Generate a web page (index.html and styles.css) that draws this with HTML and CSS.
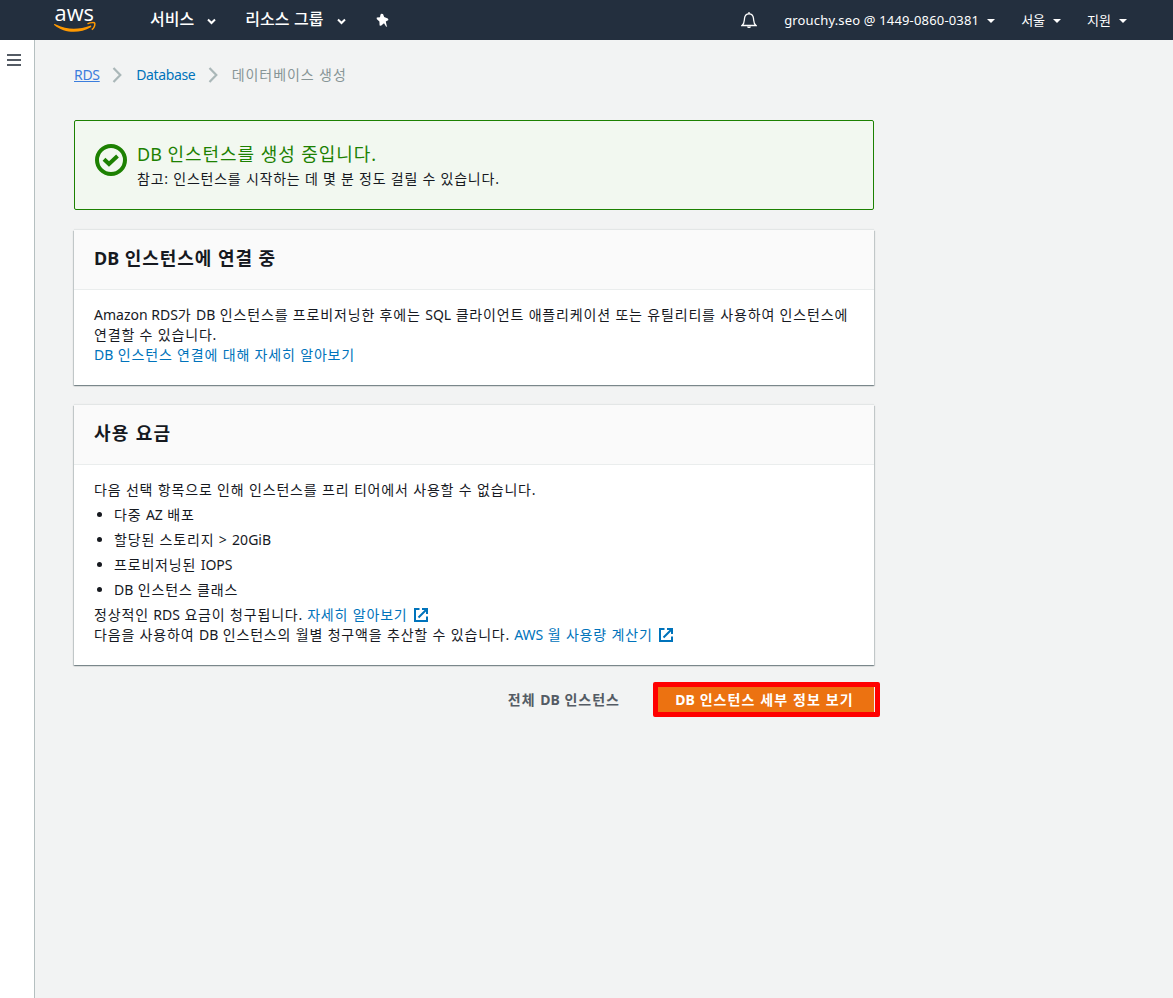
FILE: index.html
```
<!DOCTYPE html>
<html lang="ko">
<head>
<meta charset="utf-8">
<title>RDS · 데이터베이스 생성</title>
<link rel="stylesheet" href="styles.css">
</head>
<body>
<header class="topnav">
  <svg class="logo" width="44" height="34" viewBox="0 0 44 34" role="img" aria-label="aws">
    <text class="logo-text" x="1.5" y="17.5" textLength="39.5" lengthAdjust="spacingAndGlyphs">aws</text>
    <path d="M1 21.1C1.8 20.7 2.4 21.2 3.5 21.8C14 26.9 26 26.9 37 22.7C38.5 22.3 38.8 23.5 37.8 24.2C27 30.5 12 31 1.2 21.9Z" fill="#f90"/>
    <path d="M34.5 20.9C38 19.1 41.6 19.5 41.8 20.3C42 22.1 40.8 25.1 38.8 26.7" fill="none" stroke="#f90" stroke-width="1.5"/>
  </svg>
  <nav class="menu menu-main">
    <a class="menu-item"><span class="t">서비스</span><svg width="9" height="7" viewBox="0 0 9 7"><path d="M1 1.5L4.5 5L8 1.5" fill="none" stroke="#fff" stroke-width="2"/></svg></a>
    <a class="menu-item"><span class="t groups">리소스 그룹</span><svg width="9" height="7" viewBox="0 0 9 7"><path d="M1 1.5L4.5 5L8 1.5" fill="none" stroke="#fff" stroke-width="2"/></svg></a>
    <svg class="pin" width="14" height="15" viewBox="0 0 14 15"><path d="M5 .8L7 1L8.2 4L11.8 5.5L12.5 7L9.8 8.6L10.6 12.2L11.2 13.8L10 13.6L8 10.2L5 12.8L3.6 12.6L3.4 8.6L.7 6L.8 4.4L4 4.2L4.4 2Z" fill="#fff"/></svg>
  </nav>
  <nav class="menu menu-side">
    <svg class="bell" width="16" height="17" viewBox="0 0 16 17" fill="none" stroke="#fff" stroke-width="1.3"><path d="M1 13.5C3.4 11.6 3.2 10 3.5 6.5C3.8 3.5 5.5 1.9 8 1.9S12.2 3.5 12.5 6.5C12.8 10 12.6 11.6 15 13.5Z"/><path d="M8 0V2"/><path d="M6 14.4H10C9.7 16.6 6.3 16.6 6 14.4Z" fill="#fff" stroke="none"/></svg>
    <a class="side-item"><span class="t account">grouchy.seo @ 1449-0860-0381</span><i class="caret"></i></a>
    <a class="side-item"><span class="t">서울</span><i class="caret"></i></a>
    <a class="side-item"><span class="t">지원</span><i class="caret"></i></a>
  </nav>
</header>
<div class="shell">
  <aside class="rail"><i></i><i></i><i></i></aside>
  <main class="content">
    <nav class="crumbs">
      <a class="t crumb-rds">RDS</a>
      <svg width="10" height="16" viewBox="0 0 10 16"><path d="M1.5 1L8.3 8L1.5 15" fill="none" stroke="#aab7b8" stroke-width="2.2"/></svg>
      <a class="t crumb-db">Database</a>
      <svg width="10" height="16" viewBox="0 0 10 16"><path d="M1.5 1L8.3 8L1.5 15" fill="none" stroke="#aab7b8" stroke-width="2.2"/></svg>
      <span class="t crumb-now">데이터베이스 생성</span>
    </nav>
    <section class="alert">
      <svg width="32" height="32" viewBox="0 0 32 32" fill="none" stroke="#1d8102" stroke-width="4"><circle cx="16" cy="16" r="14"/><path d="M9 15.2L14 20L22.5 12"/></svg>
      <div>
        <h2 class="alert-title"><span class="t"><span class="en">DB</span> 인스턴스를 생성 중입니다.</span></h2>
        <p class="alert-note"><span class="t">참고: 인스턴스를 시작하는 데 몇 분 정도 걸릴 수 있습니다.</span></p>
      </div>
    </section>
    <section class="card card-connect">
      <h2 class="card-head"><span class="t"><span class="en">DB</span> 인스턴스에 연결 중</span></h2>
      <div class="card-body">
        <p><span class="t"><span class="en">Amazon RDS</span>가 <span class="en">DB</span> 인스턴스를 프로비저닝한 후에는 <span class="en">SQL</span> 클라이언트 애플리케이션 또는 유틸리티를 사용하여 인스턴스에</span><br><span class="t">연결할 수 있습니다.</span></p>
        <p><a class="t"><span class="en">DB</span> 인스턴스 연결에 대해 자세히 알아보기</a></p>
      </div>
    </section>
    <section class="card card-cost">
      <h2 class="card-head"><span class="t wide">사용 요금</span></h2>
      <div class="card-body">
        <p><span class="t">다음 선택 항목으로 인해 인스턴스를 프리 티어에서 사용할 수 없습니다.</span></p>
        <ul class="limits">
          <li><span class="t">다중 <span class="en">AZ</span> 배포</span></li>
          <li><span class="t">할당된 스토리지 &gt; <span class="en">20GiB</span></span></li>
          <li><span class="t">프로비저닝된 <span class="en">IOPS</span></span></li>
          <li><span class="t"><span class="en">DB</span> 인스턴스 클래스</span></li>
        </ul>
        <p class="row"><span class="t">정상적인 <span class="en">RDS</span> 요금이 청구됩니다.</span><a class="t">자세히 알아보기</a><svg class="ext" width="14" height="14" viewBox="0 0 14 14" fill="none" stroke="#0073bb" stroke-width="2"><path d="M5.5 1H1V13H13V8.5"/><path d="M8 1H13V6M13 1L4.5 9.5"/></svg></p>
        <p class="row"><span class="t">다음을 사용하여 <span class="en">DB</span> 인스턴스의 월별 청구액을 추산할 수 있습니다.</span><a class="t"><span class="en">AWS</span> 월 사용량 계산기</a><svg class="ext" width="14" height="14" viewBox="0 0 14 14" fill="none" stroke="#0073bb" stroke-width="2"><path d="M5.5 1H1V13H13V8.5"/><path d="M8 1H13V6M13 1L4.5 9.5"/></svg></p>
      </div>
    </section>
    <div class="actions">
      <a class="link-btn"><span class="t">전체 <span class="en">DB</span> 인스턴스</span></a>
      <div class="highlight"><button class="primary"><span class="t"><span class="en">DB</span> 인스턴스 세부 정보 보기</span></button></div>
    </div>
  </main>
</div>
</body>
</html>
```
FILE: styles.css
```
* { box-sizing: border-box; }
body {
  margin: 0;
  height: 998px;
  display: flex;
  flex-direction: column;
  overflow: hidden;
  background: #f2f3f3;
  color: #16191f;
  font: 14px/20px "Noto Sans", "Noto Sans CJK KR", sans-serif;
}
.t { white-space: nowrap; display: inline-block; }
.en { letter-spacing: 0; }
h2, p, ul { margin: 0; padding: 0; font-weight: 400; }
svg { display: block; flex: none; }

.topnav { height: 40px; flex: none; background: #232f3e; color: #fff; display: flex; align-items: center; padding-left: 53px; }
.logo { overflow: visible; }
.logo-text { font: 500 22px "Open Sans", sans-serif; fill: #fff; }
.menu { display: flex; align-items: center; }
.menu-main { margin-left: 53px; font-size: 16px; font-weight: 500; }
.menu-item { display: flex; align-items: center; gap: 13px; margin-right: 29px; }
.menu-item .t { margin-bottom: 2px; }
.menu-item svg { margin-top: 2px; }
.groups { letter-spacing: .1px; }
.pin { margin-left: 1px; }
.menu-side { margin-left: auto; padding-right: 46px; font-size: 13px; }
.bell { margin-right: 27px; }
.side-item { display: flex; align-items: center; gap: 8px; margin-left: 26px; }
.bell + .side-item { margin-left: 0; }
.account { letter-spacing: .167px; }
.caret { border: 4px solid transparent; border-top-color: #fff; border-bottom: 0; margin-top: 1px; }

.shell { flex: 1; display: flex; }
.rail { width: 35px; background: #fff; border-right: 1px solid #b5bfc0; padding: 14px 0 0 7px; display: flex; flex-direction: column; gap: 3px; }
.rail i { width: 14px; height: 2px; background: #545b64; }
.content { padding: 25px 0 0 39px; width: 846px; }

.crumbs { display: flex; align-items: center; height: 20px; }
.crumbs svg { margin: 0 14px 0 12.5px; }
.crumbs a, .card a { color: #0073bb; }
.crumbs .crumb-rds { color: #3b7ddd; text-decoration: underline; letter-spacing: -.3px; }
.crumb-db { letter-spacing: -.38px; }
.crumb-now { color: #879596; letter-spacing: .92px; }

.alert { margin-top: 35px; width: 800px; height: 90px; border: 1px solid #1d8102; border-radius: 2px; background: #f2f8f0; display: flex; padding: 22px 20px; gap: 10px; }
.alert > svg { margin-top: 1px; }
.alert-title { font-size: 18px; line-height: 22px; color: #1d8102; letter-spacing: .95px; }
.alert-note { margin-top: 4px; letter-spacing: .77px; }

.card { width: 800px; background: #fff; box-shadow: 0 1px 1px 0 rgba(0,28,36,.3), 1px 1px 1px 0 rgba(0,28,36,.15), -1px 1px 1px 0 rgba(0,28,36,.15), 0 -1px 1px 0 rgba(0,28,36,.06); }
.card-connect { margin-top: 20px; height: 155px; }
.card-cost { margin-top: 20px; height: 260px; }
.card-head { height: 60px; padding: 17px 20px 0; font-size: 18px; line-height: 22px; font-weight: 700; letter-spacing: .94px; background: #fafafa; border-bottom: 1px solid #eaeded; }
.wide { letter-spacing: 1.3px; }
.card-body { padding: 15px 20px; letter-spacing: .83px; }
.limits { padding-left: 20px; letter-spacing: .82px; }
.limits li { margin-top: 5px; }
.row { display: flex; align-items: center; gap: 4px; }
.ext { margin-left: 2px; }
.limits + .row { margin-top: 5px; }

.actions { display: flex; align-items: center; justify-content: flex-end; width: 806px; margin-top: 17px; gap: 33px; font-weight: 700; letter-spacing: 1px; }
.link-btn { color: #545b64; }
.highlight { width: 227px; height: 35px; border: 5px solid #f00; border-radius: 2px; }
.primary { display: block; width: 100%; height: 100%; border: 0; border-right: 1px solid #f2f3f3; padding: 0 3px 0 0; background: #ec7211; color: #fff; font: inherit; letter-spacing: 1.1px; }
```
